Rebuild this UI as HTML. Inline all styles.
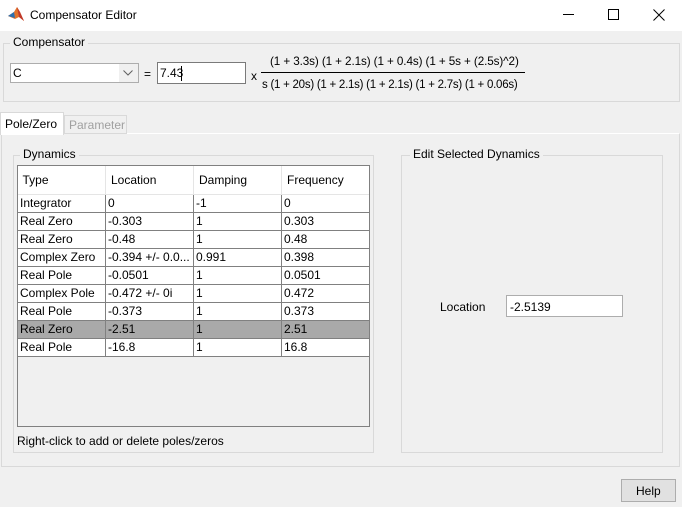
<!DOCTYPE html>
<html><head><meta charset="utf-8"><style>
*{box-sizing:border-box;margin:0;padding:0}
body{width:682px;height:507px;background:#f0f0f0;font-family:"Liberation Sans",sans-serif;font-size:12px;color:#000;position:relative;overflow:hidden}
.a{position:absolute}
.grp{position:absolute;border:1px solid #d9d9d9}
.lg{position:absolute;background:#f0f0f0;padding:0 3px;top:-9px;left:6px;font-size:12px}
table{border-collapse:collapse;position:absolute;left:-1px;top:0}
tr{background:#fff}
td{border:1px solid #808080;height:18px;padding:0 2px;font-size:12px;white-space:nowrap;overflow:hidden;line-height:16px}
th{height:28px;font-weight:normal;text-align:left;padding-left:5px;border-right:1px solid #e5e5e5;border-bottom:1px solid #e5e5e5;background:#fff}
</style></head><body>
<div class="a" style="left:0;top:0;width:682px;height:31px;background:#fff"></div>
<svg class="a" style="left:8px;top:6px" width="16" height="16" viewBox="0 0 16 16"><path d="M0 10 L6 6 L9 1 L12 6 L16 15 L11 11 L7 13 Z" fill="#e2722a"/><path d="M0 10 L6 6 L7 12 Z" fill="#2a6fb0"/><path d="M9 1 L12 6 L16 15 L11 11 Z" fill="#c0392b"/></svg>
<div class="a" style="left:30px;top:8px;font-size:12px">Compensator Editor</div>
<div class="a" style="left:563px;top:14px;width:11px;height:1px;background:#000"></div>
<div class="a" style="left:608px;top:9px;width:11px;height:11px;border:1px solid #000"></div>
<svg class="a" style="left:653px;top:9px" width="12" height="12"><path d="M0.5 0.5 L11.5 11.5 M11.5 0.5 L0.5 11.5" stroke="#000" stroke-width="1"/></svg>

<div class="grp" style="left:3px;top:43px;width:677px;height:59px"><div class="lg">Compensator</div></div>
<div class="a" style="left:10px;top:63px;width:129px;height:20px;border:1px solid #adadad;background:#fff"></div>
<div class="a" style="left:119px;top:64px;width:19px;height:18px;background:#f0f0f0"></div>
<svg class="a" style="left:123px;top:70px" width="10" height="6"><path d="M0.5 0.5 L5 5 L9.5 0.5" stroke="#606060" fill="none"/></svg>
<div class="a" style="left:13px;top:66px">C</div>
<div class="a" style="left:144px;top:67px">=</div>
<div class="a" style="left:157px;top:62px;width:89px;height:22px;border:1px solid #7a7a7a;background:#fff"></div>
<div class="a" style="left:160px;top:66px">7.43</div>
<div class="a" style="left:181px;top:66px;width:1px;height:15px;background:#000"></div>
<div class="a" style="left:251px;top:69px">x</div>
<div class="a" style="left:270px;top:55px;font-size:11.7px;letter-spacing:-0.1px">(1 + 3.3s) (1 + 2.1s) (1 + 0.4s) (1 + 5s + (2.5s)^2)</div>
<div class="a" style="left:261px;top:72px;width:264px;height:1px;background:#000"></div>
<div class="a" style="left:262px;top:79px;font-size:11.5px;letter-spacing:-0.25px">s (1 + 20s) (1 + 2.1s) (1 + 2.1s) (1 + 2.7s) (1 + 0.06s)</div>

<div class="a" style="left:1px;top:133px;width:679px;height:334px;border:1px solid #d9d9d9;border-top:1px solid #fff"></div>
<div class="a" style="left:0;top:112px;width:64px;height:23px;background:#fff;border:1px solid #d9d9d9;border-bottom:none"></div>
<div class="a" style="left:5px;top:117px">Pole/Zero</div>
<div class="a" style="left:64px;top:115px;width:63px;height:19px;border:1px solid #d9d9d9;background:#f0f0f0"></div>
<div class="a" style="left:69px;top:118px;color:#a0a0a0">Parameter</div>

<div class="grp" style="left:13px;top:155px;width:361px;height:298px"><div class="lg" style="left:6px">Dynamics</div></div>
<div class="a" style="left:17px;top:165px;width:353px;height:262px;border:1px solid #808080;background:#f0f0f0;overflow:hidden">
<table style="width:353px">
<tr><th style="width:88px">Type</th><th style="width:88px">Location</th><th style="width:88px">Damping</th><th style="width:88px">Frequency</th></tr>
<tr><td>Integrator</td><td>0</td><td>-1</td><td>0</td></tr>
<tr><td>Real Zero</td><td>-0.303</td><td>1</td><td>0.303</td></tr>
<tr><td>Real Zero</td><td>-0.48</td><td>1</td><td>0.48</td></tr>
<tr><td>Complex Zero</td><td>-0.394 +/- 0.0...</td><td>0.991</td><td>0.398</td></tr>
<tr><td>Real Pole</td><td>-0.0501</td><td>1</td><td>0.0501</td></tr>
<tr><td>Complex Pole</td><td>-0.472 +/- 0i</td><td>1</td><td>0.472</td></tr>
<tr><td>Real Pole</td><td>-0.373</td><td>1</td><td>0.373</td></tr>
<tr style="background:#a9a9a9"><td>Real Zero</td><td>-2.51</td><td>1</td><td>2.51</td></tr>
<tr><td>Real Pole</td><td>-16.8</td><td>1</td><td>16.8</td></tr>
</table>
</div>
<div class="a" style="left:17px;top:434px">Right-click to add or delete poles/zeros</div>

<div class="grp" style="left:401px;top:155px;width:262px;height:298px"><div class="lg" style="left:8px">Edit Selected Dynamics</div></div>
<div class="a" style="left:440px;top:300px">Location</div>
<div class="a" style="left:506px;top:295px;width:117px;height:22px;border:1px solid #adadad;background:#fff"></div>
<div class="a" style="left:510px;top:300px">-2.5139</div>

<div class="a" style="left:621px;top:479px;width:55px;height:23px;border:1px solid #adadad;background:#e1e1e1"></div>
<div class="a" style="left:636px;top:484px">Help</div>
</body></html>
